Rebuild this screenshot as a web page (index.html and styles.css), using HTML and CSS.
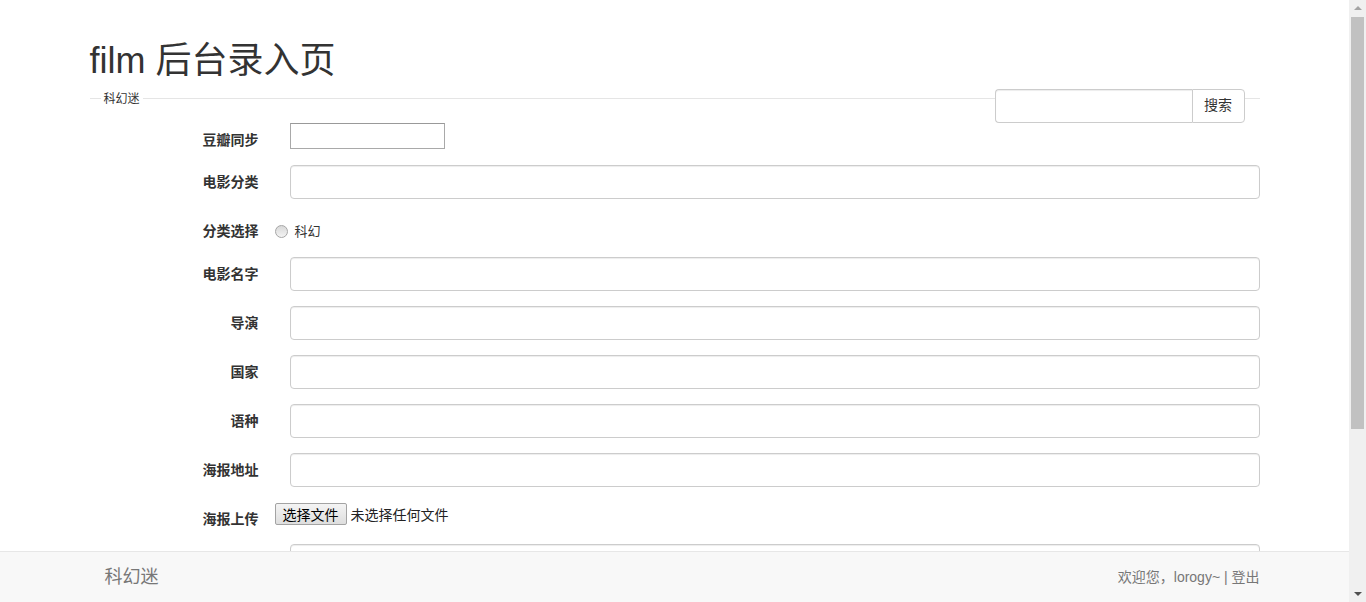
FILE: index.html
```html
<!DOCTYPE html>
<html lang="zh-CN">

<head>
  <meta charset="UTF-8">
  <meta name="viewport" content="width=device-width, initial-scale=1.0">
  <title>film 后台录入页</title>
  <link rel="stylesheet" href="styles.css">
</head>

<body>
  <div class="container">
    <h1 class="page-title">film 后台录入页</h1>
    <fieldset class="panel">
      <legend>科幻迷</legend>
      <form class="search-form">
        <input type="text" class="search-input">
        <button type="button" class="search-btn">搜索</button>
      </form>
      <form class="entry-form">
        <div class="form-row">
          <label class="form-label">豆瓣同步</label>
          <div class="form-field"><input type="text" class="plain-input"></div>
        </div>
        <div class="form-row">
          <label class="form-label">电影分类</label>
          <div class="form-field"><input type="text" class="form-control"></div>
        </div>
        <div class="form-row">
          <label class="form-label">分类选择</label>
          <div class="form-field radio-field">
            <label class="radio-inline"><input type="radio" name="type" class="radio"> 科幻</label>
          </div>
        </div>
        <div class="form-row">
          <label class="form-label">电影名字</label>
          <div class="form-field"><input type="text" class="form-control"></div>
        </div>
        <div class="form-row">
          <label class="form-label">导演</label>
          <div class="form-field"><input type="text" class="form-control"></div>
        </div>
        <div class="form-row">
          <label class="form-label">国家</label>
          <div class="form-field"><input type="text" class="form-control"></div>
        </div>
        <div class="form-row">
          <label class="form-label">语种</label>
          <div class="form-field"><input type="text" class="form-control"></div>
        </div>
        <div class="form-row">
          <label class="form-label">海报地址</label>
          <div class="form-field"><input type="text" class="form-control"></div>
        </div>
        <div class="form-row">
          <label class="form-label">海报上传</label>
          <div class="form-field file-field">
            <button type="button" class="file-btn">选择文件</button>
            <span class="file-name">未选择任何文件</span>
          </div>
        </div>
        <div class="form-row">
          <label class="form-label">上映时间</label>
          <div class="form-field"><input type="text" class="form-control"></div>
        </div>
        <div class="form-row">
          <label class="form-label">评分</label>
          <div class="form-field"><input type="text" class="form-control"></div>
        </div>
        <div class="form-row">
          <label class="form-label">剧情简介</label>
          <div class="form-field"><textarea class="form-control text-area" rows="3"></textarea></div>
        </div>
        <div class="form-row">
          <div class="form-label"></div>
          <div class="form-field"><button type="submit" class="submit-btn">提交</button></div>
        </div>
      </form>
    </fieldset>
  </div>

  <nav class="navbar-bottom">
    <div class="container navbar-inner">
      <a class="navbar-brand" href="#">科幻迷</a>
      <p class="navbar-text">欢迎您，lorogy~ | <a href="#">登出</a></p>
    </div>
  </nav>

  <!-- window scrollbar as it shows in the capture -->
  <div class="scrollbar" aria-hidden="true">
    <span class="scroll-arrow up"></span>
    <span class="scroll-thumb"></span>
    <span class="scroll-track"></span>
    <span class="scroll-arrow down"></span>
  </div>
</body>

</html>
```

FILE: styles.css
```css
body {
  margin: 0 17px 0 0;
  padding-bottom: 60px;
  font-family: 'Liberation Sans', 'Noto Sans CJK SC', sans-serif;
  font-size: 14px;
  line-height: 1.42857;
  color: #333;
  background: #fff;
}

.container {
  width: 1170px;
  margin: 0 auto;
}

.page-title {
  margin: 41px 0 10px;
  font-size: 36px;
  font-weight: normal;
  line-height: 1.1;
}

.panel {
  position: relative;
  margin: 0;
  padding: 0;
  min-width: 0;
  border: 0;
  border-top: 1px solid #e5e5e5;
}

.panel legend {
  margin-left: 11px;
  padding: 0 3px;
  font-size: 12px;
  line-height: 16px;
}

/* search box sitting over the fieldset line */
.search-form {
  position: absolute;
  top: -18px;
  right: 15px;
  display: flex;
}

.search-input {
  box-sizing: border-box;
  width: 197px;
  height: 34px;
  margin: 0;
  padding: 6px 12px;
  border: 1px solid #ccc;
  border-right: 0;
  border-radius: 4px 0 0 4px;
  box-shadow: inset 0 1px 1px rgba(0, 0, 0, 0.075);
  font: inherit;
}

.search-btn {
  box-sizing: border-box;
  width: 53px;
  height: 34px;
  margin: 0;
  padding: 0;
  border: 1px solid #ccc;
  border-radius: 0 4px 4px 0;
  background: #fff;
  color: #333;
  font: inherit;
}

.entry-form {
  padding-top: 16px;
}

.form-row {
  display: flex;
  margin-bottom: 15px;
}

.form-label {
  box-sizing: border-box;
  width: 185px;
  flex: none;
  padding: 7px 16px 0 0;
  text-align: right;
  font-weight: bold;
  line-height: 20px;
}

.form-field {
  display: flex;
  flex: 1;
  align-items: flex-start;
}

.form-control {
  box-sizing: border-box;
  flex: 1;
  height: 34px;
  margin: 0 0 0 15px;
  padding: 6px 12px;
  border: 1px solid #ccc;
  border-radius: 4px;
  background: #fff;
  box-shadow: inset 0 1px 1px rgba(0, 0, 0, 0.075);
  font: inherit;
}

.text-area {
  height: 80px;
  resize: none;
}

.plain-input {
  box-sizing: border-box;
  width: 155px;
  height: 26px;
  margin: 0 0 0 15px;
  border: 1px solid #a9a9a9;
  border-top-color: #999;
  font: inherit;
}

.radio-field {
  padding-top: 8px;
  line-height: 20px;
}

.radio-inline {
  display: flex;
  align-items: center;
  font-size: 13px;
}

.radio {
  appearance: none;
  box-sizing: border-box;
  width: 13px;
  height: 13px;
  margin: 0 7px 0 0;
  border: 1px solid #a6a6a6;
  border-radius: 50%;
  background: linear-gradient(#d8d8d8, #f4f4f4);
}

.file-field {
  align-items: center;
  align-self: flex-start;
  padding-top: 1px;
}

.file-btn {
  box-sizing: border-box;
  height: 22px;
  margin: 0;
  padding: 0 7px;
  border: 1px solid #a3a3a3;
  border-radius: 2px;
  background: linear-gradient(#f4f4f4, #dedede);
  color: #000;
  font-family: 'Noto Sans CJK SC', sans-serif;
  font-size: 14px;
  line-height: 20px;
}

.file-name {
  margin-left: 4px;
  color: #222;
  font-family: 'Noto Sans CJK SC', sans-serif;
  font-size: 14px;
}

.submit-btn {
  height: 34px;
  margin-left: 15px;
  padding: 0 14px;
  border: 1px solid #ccc;
  border-radius: 4px;
  background: #fff;
  font: inherit;
}

.navbar-bottom {
  position: fixed;
  left: 0;
  right: 17px;
  bottom: 0;
  height: 50px;
  background: #f8f8f8;
  border-top: 1px solid #e7e7e7;
}

.navbar-inner {
  display: flex;
  justify-content: space-between;
  align-items: center;
  height: 50px;
  padding-top: 2px;
  box-sizing: border-box;
}

.navbar-brand {
  padding-left: 15px;
  color: #777;
  font-size: 18px;
  text-decoration: none;
}

.navbar-text {
  margin: 0;
  color: #777;
}

.navbar-text a {
  color: #777;
  text-decoration: none;
}

.scrollbar {
  position: fixed;
  top: 0;
  right: 0;
  bottom: 0;
  width: 17px;
  display: flex;
  flex-direction: column;
  background: #f0f0f0;
}

.scroll-arrow {
  position: relative;
  flex: none;
  height: 17px;
}

.scroll-arrow::after {
  content: '';
  position: absolute;
  left: 5px;
  border-left: 4px solid transparent;
  border-right: 4px solid transparent;
}

.scroll-arrow.up::after {
  top: 6px;
  border-bottom: 4px solid #a3a3a3;
}

.scroll-arrow.down::after {
  top: 7px;
  border-top: 4px solid #505050;
}

.scroll-thumb {
  flex: none;
  height: 412px;
  margin: 0 2px;
  background: #c1c1c1;
}

.scroll-track {
  flex: 1;
}
```
